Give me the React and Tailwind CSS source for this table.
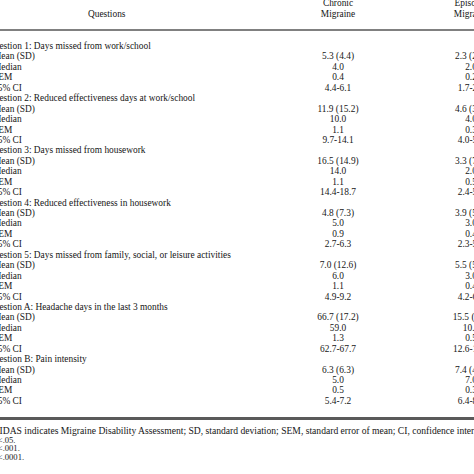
import React from "react";

const blocks = [
  {
    q: "Question 1: Days missed from work/school",
    c: ["5.3 (4.4)", "4.0", "0.4", "4.4-6.1"],
    e: ["2.3 (2.5)", "2.0", "0.2", "1.7-2.8"],
  },
  {
    q: "Question 2: Reduced effectiveness days at work/school",
    c: ["11.9 (15.2)", "10.0", "1.1", "9.7-14.1"],
    e: ["4.6 (3.9)", "4.0", "0.3", "4.0-5.2"],
  },
  {
    q: "Question 3: Days missed from housework",
    c: ["16.5 (14.9)", "14.0", "1.1", "14.4-18.7"],
    e: ["3.3 (7.1)", "2.0", "0.5", "2.4-5.2"],
  },
  {
    q: "Question 4: Reduced effectiveness in housework",
    c: ["4.8 (7.3)", "5.0", "0.9", "2.7-6.3"],
    e: ["3.9 (5.3)", "3.0", "0.4", "2.3-5.5"],
  },
  {
    q: "Question 5: Days missed from family, social, or leisure activities",
    c: ["7.0 (12.6)", "6.0", "1.1", "4.9-9.2"],
    e: ["5.5 (5.8)", "3.0", "0.4", "4.2-6.8"],
  },
  {
    q: "Question A: Headache days in the last 3 months",
    c: ["66.7 (17.2)", "59.0", "1.3", "62.7-67.7"],
    e: ["15.5 (6.8)", "10.0", "0.5", "12.6-14.4"],
  },
  {
    q: "Question B: Pain intensity",
    c: ["6.3 (6.3)", "5.0", "0.5", "5.4-7.2"],
    e: ["7.4 (4.6)", "7.0", "0.3", "6.4-8.4"],
  },
];

const labels = ["Mean (SD)", "Median", "SEM", "95% CI"];

function Row({ label, indent, c, e }) {
  return (
    <div className="grid grid-cols-[317px_66px_65px_70px] h-[10.45px] leading-[10.45px] whitespace-nowrap">
      <div className={indent ? "pl-[5px]" : ""}>{label}</div>
      <div className="text-center">{c}</div>
      <div />
      <div className="text-center">{e}</div>
    </div>
  );
}

export default function App() {
  return (
    <div
      className="w-[474px] h-[474px] overflow-hidden bg-white text-[#161616]"
      style={{ fontFamily: '"Liberation Serif", "Times New Roman", serif' }}
    >
      <div className="ml-[-12px] w-[530px] text-[9.4px]">
        {/* header */}
        <div className="grid grid-cols-[317px_66px_65px_70px] mt-[-2px] leading-[11px] h-[31px]">
          <div className="flex flex-col">
            <div className="h-[11px]" />
            <div className="pl-[100px]">Questions</div>
          </div>
          <div className="text-center">
            <div>Chronic</div>
            <div>Migraine</div>
          </div>
          <div />
          <div className="text-center">
            <div>Episodic</div>
            <div>Migraine</div>
          </div>
        </div>
        <div className="h-[2px] bg-[#808080]" />
        <div className="pt-[10px]">
          {blocks.map((b, i) => (
            <div key={i}>
              <Row label={b.q} c="" e="" />
              {labels.map((l, j) => (
                <Row key={j} label={l} indent c={b.c[j]} e={b.e[j]} />
              ))}
            </div>
          ))}
        </div>
        <div className="mt-[11px] h-[2.5px] bg-[#5a5a5a]" />
        <div className="pt-[6.5px] whitespace-nowrap">
          <div className="ml-[3px] text-[9.6px] leading-[9.2px] h-[9.2px]">
            MIDAS indicates Migraine Disability Assessment; SD, standard deviation; SEM, standard error of mean; CI, confidence interval.
          </div>
          <div className="ml-[2px] text-[8.6px] leading-[8.9px] h-[8.9px]">
            <span className="text-[6px] align-top leading-none">*</span>P&lt;.05.
          </div>
          <div className="ml-[2px] text-[8.6px] leading-[8.9px] h-[8.9px]">
            <span className="text-[6px] align-top leading-none">†</span>P&lt;.001.
          </div>
          <div className="ml-[2px] text-[8.6px] leading-[8.9px] h-[8.9px]">
            <span className="text-[6px] align-top leading-none">‡</span>P&lt;.0001.
          </div>
        </div>
      </div>
    </div>
  );
}
